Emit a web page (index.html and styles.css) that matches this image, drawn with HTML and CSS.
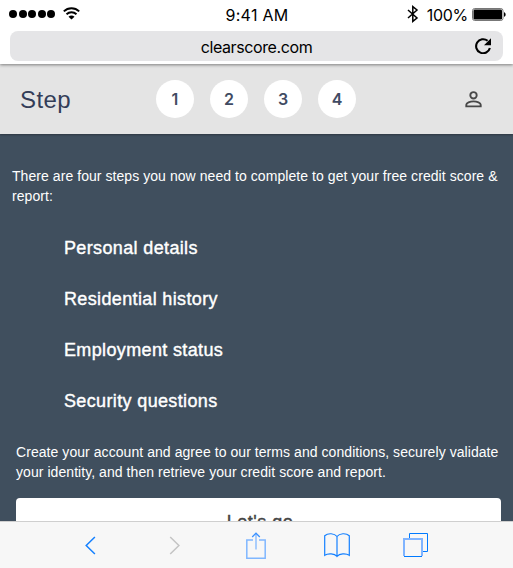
FILE: index.html
```html
<!DOCTYPE html>
<html lang="en">
<head>
<meta charset="utf-8">
<title>ClearScore</title>
<link rel="stylesheet" href="styles.css">
</head>
<body>
<div class="screen">
  <div class="chrome">
    <div class="status">
      <div class="status-left">
        <span class="signal"><i></i><i></i><i></i><i></i><i></i></span>
        <svg class="wifi" width="17" height="13" viewBox="0 0 17 13" fill="none" stroke="#000" stroke-width="1.9"><path d="M.8 4.4C5.2.1 11.8.1 16.2 4.4M3.5 7.3c2.9-2.8 7.1-2.8 10 0"/><path d="M5.5 9.7c1.7-1.6 4.3-1.6 6 0l-3 2.9z" fill="#000" stroke="none"/></svg>
      </div>
      <span class="time">9:41 AM</span>
      <div class="status-right">
        <svg width="12" height="18" viewBox="0 0 12 18" fill="none" stroke="#000" stroke-width="1.5"><path d="M1 5l9 8-4.2 3.4V1.6L10 5l-9 8"/></svg>
        <span class="percent">100%</span>
        <svg width="34" height="13" viewBox="0 0 34 13"><rect x=".5" y=".5" width="30.5" height="12" rx="2.2" fill="#fff" stroke="#777"/><rect x="1.5" y="1.5" width="28.5" height="10" rx="1.2"/><path d="M32 4.2c2.2.6 2.2 4 0 4.6z"/></svg>
      </div>
    </div>
    <div class="address">
      <span class="url">clearscore.com</span>
      <svg class="reload" width="16" height="16" viewBox="0 0 16 16"><path d="M14.9 10A7 7 0 1 1 12.6 2.8" fill="none" stroke="#000" stroke-width="2.1"/><path d="M16 .3v6.9H9z"/></svg>
    </div>
  </div>
  <header class="header">
    <h1 class="title">Step</h1>
    <ol class="steps"><li>1</li><li>2</li><li>3</li><li>4</li></ol>
    <svg class="user" width="17" height="17" viewBox="0 0 17 17" fill="none" stroke="#484848" stroke-width="1.9"><circle cx="8.5" cy="4.3" r="3.2"/><path d="M1.3 15.4v-1.7c0-1.8 3.6-3.3 7.2-3.3s7.2 1.5 7.2 3.3v1.7z"/></svg>
  </header>
  <main class="content">
    <p class="intro">There are four steps you now need to complete to get your free credit score &amp;<br>report:</p>
    <ul class="tasks">
      <li>Personal details</li>
      <li>Residential history</li>
      <li>Employment status</li>
      <li>Security questions</li>
    </ul>
    <p class="outro">Create your account and agree to our terms and conditions, securely validate<br>your identity, and then retrieve your credit score and report.</p>
    <button class="go">Let's go</button>
  </main>
  <nav class="toolbar">
    <svg width="12" height="19" viewBox="0 0 12 19" fill="none" stroke="#1480ff" stroke-width="1.5"><path d="M10.9 1L2.2 9.5l8.7 8.5"/></svg>
    <svg width="12" height="19" viewBox="0 0 12 19" fill="none" stroke="#c4c4c4" stroke-width="1.5"><path d="M1.2 1l8.7 8.5L1.2 18"/></svg>
    <svg width="20" height="27" viewBox="0 0 20 27" fill="none"><path d="M7 8H.8v18.2h18.4V8H13" stroke="#80b7ff" stroke-width="1.5"/><path d="M10 1v16.5" stroke="#80b7ff" stroke-width="1.3"/><path d="M6.2 5L10 1.2 13.8 5" stroke="#3b91ff" stroke-width="1.3"/></svg>
    <svg width="26" height="25" viewBox="0 0 26 25" fill="none" stroke="#1480ff" stroke-width="1.2"><path d="M13 23.5V3.5C10.5.2 4-.2.7 2.7v19.6c3.3-2.2 9.8-2 12.3 1.2 2.5-3.2 9-3.4 12.3-1.2V2.7C22-.2 15.5.2 13 3.5"/></svg>
    <svg width="25" height="24" viewBox="0 0 25 24" fill="none"><path d="M6.5 5V.5h18v18H20" stroke="#007aff"/><path d="M1 23V6h18v17" stroke="#80b4ff" stroke-width="2"/><path d="M1 23.5h18" stroke="#007aff"/></svg>
  </nav>
</div>
</body>
</html>
```
FILE: styles.css
```css
* { box-sizing: border-box; }
body, h1, p, ul, ol { margin: 0; padding: 0; }
ul, ol { list-style: none; }
svg { display: block; flex: none; }
body {
  overflow: hidden;
  font-family: "Liberation Sans", Arial, sans-serif;
}
.screen {
  width: 513px;
  height: 568px;
  display: flex;
  flex-direction: column;
  overflow: hidden;
  background: #404f5e;
}
.chrome {
  height: 64px;
  flex: none;
  background: #fff;
  box-shadow: 0 1px 3px rgba(0, 0, 0, .45);
  z-index: 2;
}
.status {
  height: 31px;
  display: grid;
  grid-template-columns: 1fr auto 1fr;
  align-items: center;
  padding: 0 7px 0 9px;
  font-family: Inter, sans-serif;
  font-size: 16px;
}
.status-left { display: flex; align-items: center; gap: 8px; padding-bottom: 4px; }
.signal { display: flex; gap: 1.6px; }
.signal i { width: 8px; height: 8px; border-radius: 50%; background: #000; }
.time { letter-spacing: .3px; padding-right: 1px; margin-top: -1px; }
.status-right { display: flex; justify-content: flex-end; align-items: center; padding-bottom: 3px; }
.percent { margin: 1px 4px 0 8px; letter-spacing: -.3px; }
.address {
  height: 30px;
  margin: 0 10px;
  padding: 0 12px 0 28px;
  display: flex;
  align-items: center;
  background: #e5e5e7;
  border-radius: 8px;
}
.url {
  flex: 1;
  text-align: center;
  font: 16px/30px Inter, sans-serif;
  letter-spacing: -.4px;
  padding-top: 2px;
}
.header {
  height: 70px;
  flex: none;
  display: grid;
  grid-template-columns: 136px 1fr 17px;
  align-items: center;
  padding: 0 31px 0 20px;
  background: #e4e4e4;
  box-shadow: 0 1px 2px rgba(0, 0, 0, .3);
  z-index: 1;
}
.title {
  color: #333d58;
  font-size: 24px;
  font-weight: 400;
  line-height: 30px;
  letter-spacing: .4px;
  padding-top: 2px;
}
.steps { display: flex; gap: 16px; }
.steps li {
  width: 38px;
  height: 38px;
  border-radius: 50%;
  background: #fff;
  color: #414b63;
  text-align: center;
  font: 600 16px/38px Inter, sans-serif;
}
.content {
  flex: 1;
  min-height: 0;
  overflow: hidden;
  padding: 32px 12px 0;
  color: #fff;
}
.intro, .outro {
  font-size: 14px;
  line-height: 20px;
  letter-spacing: .06px;
  white-space: nowrap;
}
.tasks { padding: 17px 0 0 52px; }
.tasks li {
  height: 51px;
  font-size: 18px;
  line-height: 51px;
  letter-spacing: .36px;
  -webkit-text-stroke: .4px #fff;
}
.outro { padding: 15px 0 0 4px; }
.go {
  display: block;
  width: 485px;
  height: 48px;
  margin: 16px 0 0 4px;
  padding: 0 0 0 3px;
  border: 0;
  border-radius: 4px;
  background: #fff;
  color: #444;
  font: 18px/48px "Liberation Sans", Arial, sans-serif;
  letter-spacing: .5px;
  -webkit-text-stroke: .4px #444;
}
.toolbar {
  height: 47px;
  flex: none;
  display: grid;
  grid-template-columns: 85px 77px 78px 79px 79px;
  align-items: center;
  justify-items: start;
  padding-left: 84px;
  background: #f7f7f7;
  border-top: 1px solid #cfcfcf;
}
```
